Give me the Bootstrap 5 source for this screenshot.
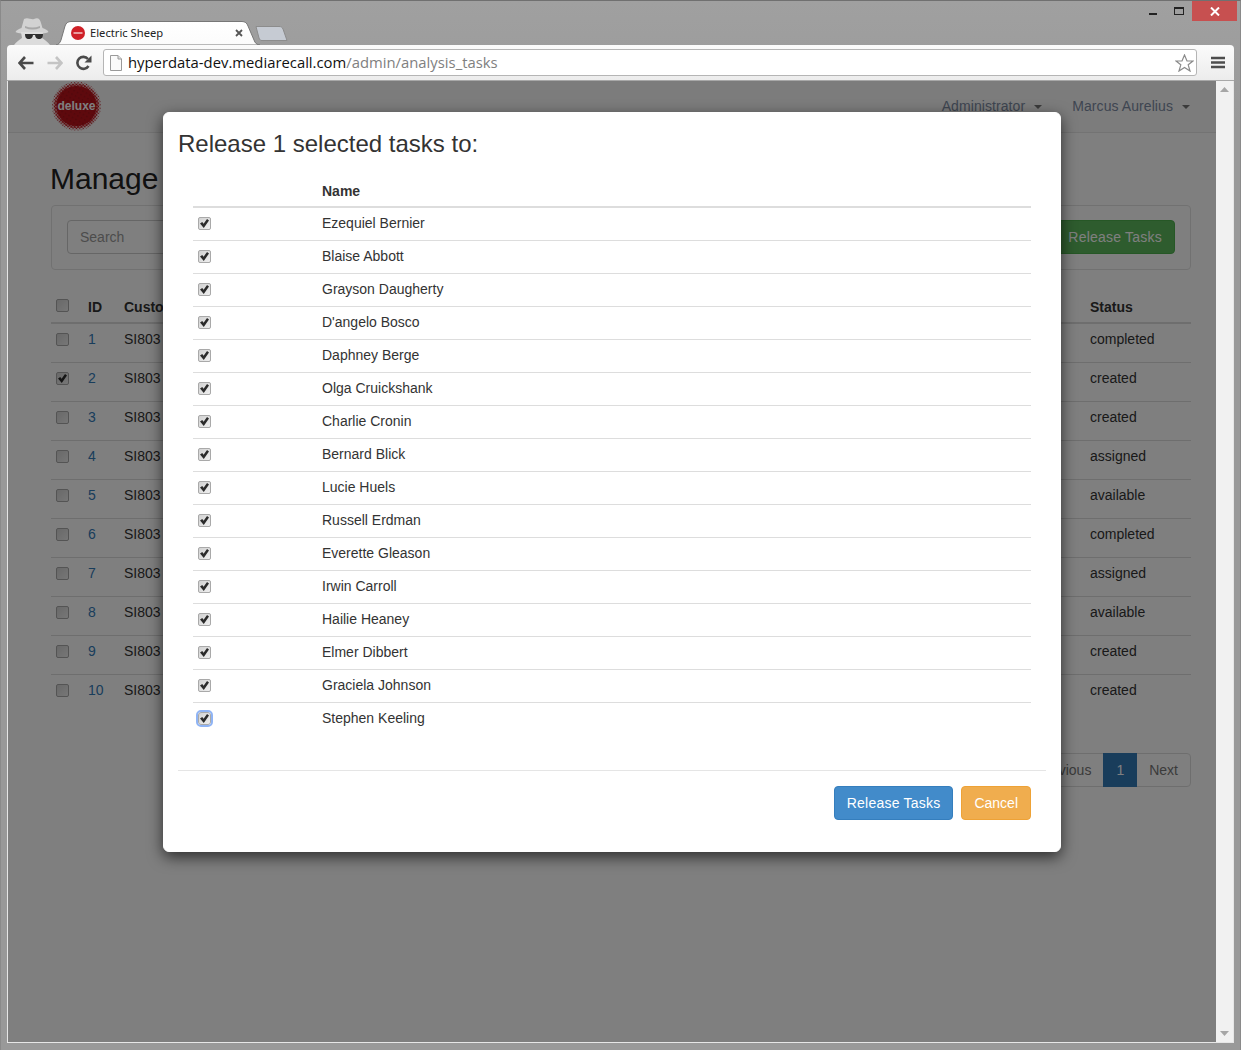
<!DOCTYPE html>
<html lang="en">
<head>
<meta charset="utf-8">
<title>Electric Sheep</title>
<link rel="stylesheet" href="https://cdn.jsdelivr.net/npm/bootstrap@5.3.0/dist/css/bootstrap.min.css">
<style>
html,body{height:1050px;overflow:hidden}
body{font-family:"Liberation Sans",Arial,sans-serif;font-size:14px;line-height:20px;color:#333;background:#9d9d9d}
.win{width:1241px;height:1050px;padding:0 7px 7px 6px;border-top:1px solid #707070;border-left:1px solid #8a8a8a;border-right:1px solid #8a8a8a;background:linear-gradient(#a0a0a0,#999 120px)}
.tabstrip{height:44px;flex:none;margin:0 -4px 0 -6px}
.spy{width:36px;height:28px;margin-left:13px}
.chrome-tab{width:204px;height:24px;margin-left:6px;padding-left:15px;font-family:"Noto Sans","Open Sans",sans-serif;font-size:11.2px;color:#222}
.tab-shape{position:absolute;left:0;top:0}
.tab-inner{position:relative}
.favicon{width:14px;height:14px;margin-right:5px}
.tab-x{position:absolute;left:179px;top:8px}
.newtab{margin-left:-6px;margin-bottom:3px}
.winbtns{margin-left:auto}
.wb{width:26px;height:20px}
.wb-close{width:45px;height:20px;background:#c75050}
.toolbar{height:36px;flex:none;border-radius:4px 4px 0 0;background:linear-gradient(#fbfbfb,#ececec);border-bottom:1px solid #a8a8a8;padding-left:4px;margin:0 -1px 0 0}
.tool{width:29px;height:29px}
.omni{height:27px;margin-left:5px;background:#fff;border:1px solid #b5b5b5;border-radius:3px;padding:0 2px 0 6px;font-family:"Open Sans","Noto Sans",sans-serif;font-size:14.84px;color:#808080;line-height:25px;width:1094px;flex:none}
.omni b{font-weight:400;color:#111}
.omni-text{margin-left:6px}
.menu-btn{width:37px;flex:none}
.view{height:962px;flex:none;border-left:1px solid #e6e6e6;border-right:1px solid #e6e6e6;border-bottom:1px solid #e6e6e6;margin:0 -1px 0 0}
.pagearea{width:1208px;height:961px;flex:none;background:#fff;overflow:hidden}
.scroller{width:17px;background:#f1f1f1;height:961px;padding:6px 0}
.top-nav{height:52px;background:#f8f8f8;border-bottom:1px solid #e7e7e7;padding:0 26px 2px 43px}
.top-nav .nav-item-x{color:#7d8ba3;font-size:14px;margin-left:30px;letter-spacing:.08px}
.nav-caret{display:inline-block;width:0;height:0;border-top:4px solid #777;border-left:4px solid transparent;border-right:4px solid transparent;margin-left:9px;vertical-align:middle}
.page-wrap{padding:0 25px 0 43px}
.page-title{font-size:30px;line-height:33px;margin:29px 0 10px -1px;font-weight:400;color:#222}
.filter-box{height:65px;border:1px solid #e3e3e3;border-radius:4px;padding:14px 15px 0;margin-bottom:19px;background:#fff}
.search-in{width:300px;height:34px;font-size:14px;padding:6px 12px;border-radius:4px;border-color:#ccc;color:#555}
.search-in::placeholder{color:#999}
.btn-rel{height:34px;font-size:14px;padding:6px 12px;border-radius:4px;background:#5cb85c;border-color:#4cae4c;color:#fff;letter-spacing:.22px}
.task-table{table-layout:fixed;width:1140px;margin:0;color:#333;--bs-table-color:#333;--bs-table-bg:transparent}
.task-table th{padding:8px 0 5px 8px;border-bottom:2px solid #ddd;line-height:20px;font-weight:700;vertical-align:top}
.task-table td{padding:5px 0 13px 8px;border-bottom:1px solid #ddd;line-height:20px}
.task-table tr:last-child td{border-bottom:0}
.task-table a{color:#337ab7;text-decoration:none}
.col-c{width:29px}.col-i{width:36px}.col-s{width:109px}
.task-table .cell-c{padding-left:5px}
.chk{appearance:none;-webkit-appearance:none;display:block;width:13px;height:13px;margin:0;border:1px solid #a9a9a9;border-radius:2px;background:linear-gradient(135deg,#d2d2d2,#eeeeee);position:relative}
.chk:checked::after{content:"";position:absolute;left:1px;top:1px;width:9px;height:9px;background:#2b2b2b;clip-path:polygon(0 50%,25% 32%,40% 52%,78% 0,100% 16%,42% 100%)}
.chk.focus-x{outline:2px solid #8fb4f5;outline-offset:0;border-radius:3px}
.task-table .chk{margin-top:4px}
.task-table th .chk{margin-top:2px}
.pager{margin:40px 0 0;--bs-pagination-padding-x:12px;--bs-pagination-padding-y:6px;--bs-pagination-font-size:14px;--bs-pagination-color:#777;--bs-pagination-border-color:#ddd;--bs-pagination-active-bg:#337ab7;--bs-pagination-active-border-color:#337ab7;--bs-pagination-border-radius:4px;line-height:20px}
.dim{position:absolute;width:100%;height:100%;--bs-backdrop-bg:#000;--bs-backdrop-opacity:.5}
.dlg{position:absolute;display:block;width:100%;height:100%;overflow:hidden;--bs-modal-bg:#fff;--bs-modal-border-color:#fff;--bs-modal-border-width:1px;--bs-modal-border-radius:6px;--bs-modal-inner-border-radius:5px;--bs-modal-header-border-width:0;--bs-modal-footer-gap:0;--bs-modal-footer-border-width:1px;--bs-modal-footer-border-color:#e5e5e5;--bs-modal-color:#333}
.dlg .modal-dialog{width:898px;max-width:898px;margin:31px 0 0 155px}
.dlg .modal-content{box-shadow:0 5px 15px rgba(0,0,0,.65);background-clip:border-box}
.dlg .modal-header{padding:18px 14px 11px}
.dlg .modal-title{font-size:24px;line-height:26px;font-weight:400;color:#333}
.dlg .modal-body{padding:5px 29px 35px}
.pick-table{width:838px;margin:0;table-layout:fixed;--bs-table-bg:transparent;--bs-table-color:#333}
.pick-table th{padding:8px 0 5px 8px;border-bottom:2px solid #ddd;line-height:20px;font-weight:700}
.pick-table td{padding:5px 0 7px 8px;border-bottom:1px solid #ddd;line-height:20px}
.pick-table tr:last-child td{border-bottom:0}
.pick-table .col-p{width:121px}
.pick-table .cell-c{padding-left:5px}
.pick-table .chk{margin-top:4px}
.dlg .modal-footer{margin:0 14px;padding:15px 15px 31px}
.dlg .btn{height:34px;font-size:14px;padding:6px 12px;border-radius:4px;line-height:20px}
.dlg .btn-go{background:#428bca;border-color:#357ebd;color:#fff;letter-spacing:.22px}
.dlg .btn-stop{background:#f0ad4e;border-color:#eea236;color:#fff}
</style>
</head>
<body>
<div class="win d-flex flex-column">
  <div class="tabstrip d-flex align-items-end">
    <svg class="spy" viewBox="0 0 36 28" aria-hidden="true">
      <path d="M10 2 C14 0 17 3 20 2 C24 0 26 2 27 6 L28.5 11 C31 12 34 13 34.5 15 C30 18 6 18 1.5 15 C2 13 5 12 7.5 11 Z" fill="#d2d2d2"/>
      <path d="M7 15 H29 L28 21 C31 23 34 25 36 28 H0 C2 25 5 23 8 21 Z" fill="#dcdcdc"/>
      <path d="M11 9 C16 11 21 11 26 9 L26 11 C21 13 16 13 11 11 Z" fill="#a8a8a8"/>
      <path transform="translate(2 0)" d="M9 17 H17 C17 21 15 22 13 22 C10 22 9 20 9 17 Z M19 17 H27 C27 20 26 22 23 22 C21 22 19 21 19 17 Z M17 17 H19 V18 H17 Z" fill="#2e2e2e"/>
    </svg>
    <div class="chrome-tab position-relative d-flex align-items-center">
      <svg class="tab-shape" width="204" height="24" viewBox="0 0 204 24" aria-hidden="true">
        <defs><linearGradient id="tg" x1="0" y1="0" x2="0" y2="1"><stop offset="0" stop-color="#fff"/><stop offset="1" stop-color="#fbfbfb"/></linearGradient></defs>
        <path d="M0 24 C2 24 4 22 5 19 L9 5 C10 2 12 .5 15 .5 H186 C189 .5 191 2 192 5 L198 19 C199 22 201 24 204 24 Z" fill="url(#tg)" stroke="#777"/>
      </svg>
      <svg class="favicon tab-inner" viewBox="0 0 14 14" aria-hidden="true"><circle cx="7" cy="7" r="7" fill="#cf2027"/><rect x="2.5" y="6.3" width="9" height="1.4" fill="#f4d0d0"/></svg>
      <span class="tab-inner">Electric Sheep</span>
      <svg class="tab-x" width="8" height="8" viewBox="0 0 8 8" aria-hidden="true"><path d="M1 1 L7 7 M7 1 L1 7" stroke="#555" stroke-width="1.8"/></svg>
    </div>
    <svg class="newtab" width="34" height="17" viewBox="0 0 34 17" aria-hidden="true"><path d="M2 1.5 H25 C27 1.5 28 2 29 4 L33 15.5 H8 C6 15.5 6 15 5 13 Z" fill="#c6cbd3" stroke="#8c8c8c"/></svg>
    <div class="winbtns d-flex align-self-start">
      <div class="wb d-flex align-items-center justify-content-center"><svg width="9" height="10" viewBox="0 0 9 10" aria-hidden="true"><rect y="7" width="8" height="2" fill="#222"/></svg></div>
      <div class="wb d-flex align-items-center justify-content-center"><svg width="11" height="9" viewBox="0 0 11 9" aria-hidden="true"><rect x=".5" y=".5" width="9" height="7" fill="none" stroke="#222"/><rect x="0" y="0" width="10" height="2" fill="#222"/></svg></div>
      <div class="wb-close d-flex align-items-center justify-content-center"><svg width="10" height="9" viewBox="0 0 10 9" aria-hidden="true"><path d="M1 .5 L9 8.5 M9 .5 L1 8.5" stroke="#fff" stroke-width="2"/></svg></div>
    </div>
  </div>
  <div class="toolbar d-flex align-items-center">
    <div class="tool d-flex align-items-center justify-content-center"><svg width="16" height="14" viewBox="0 0 16 14" aria-hidden="true"><path d="M7 1 L1.5 7 L7 13 M2 7 H15.5" fill="none" stroke="#4a4a4a" stroke-width="2.6"/></svg></div>
    <div class="tool d-flex align-items-center justify-content-center"><svg width="16" height="14" viewBox="0 0 16 14" aria-hidden="true"><path d="M9 1 L14.5 7 L9 13 M14 7 H.5" fill="none" stroke="#c4c4c4" stroke-width="2.6"/></svg></div>
    <div class="tool d-flex align-items-center justify-content-center"><svg width="16" height="16" viewBox="0 0 16 16" aria-hidden="true"><path d="M12.5 11 A6 6 0 1 1 12 4" fill="none" stroke="#4a4a4a" stroke-width="2.6"/><path d="M15.5 .5 V7.5 H8.5 Z" fill="#4a4a4a"/></svg></div>
    <div class="omni d-flex align-items-center">
      <svg width="12" height="16" viewBox="0 0 12 16" aria-hidden="true"><path d="M.5 .5 H8 L11.5 4 V15.5 H.5 Z" fill="#fafafa" stroke="#9a9a9a"/><path d="M8 .5 V4 H11.5" fill="#e0e0e0" stroke="#9a9a9a"/></svg>
      <span class="omni-text flex-grow-1"><b>hyperdata-dev.mediarecall.com</b>/admin/analysis_tasks</span>
      <svg width="19" height="18" viewBox="0 0 19 18" aria-hidden="true"><path d="M9.5 1 L12 7 H18 L13.2 10.8 L15 17 L9.5 13.4 L4 17 L5.8 10.8 L1 7 H7 Z" fill="#fff" stroke="#8a8a8a" stroke-width="1.2"/></svg>
    </div>
    <div class="menu-btn d-flex justify-content-center ps-1"><svg width="14" height="13" viewBox="0 0 14 13" aria-hidden="true"><path d="M0 2 H14 M0 6.5 H14 M0 11 H14" stroke="#4d4d4d" stroke-width="2.4"/></svg></div>
  </div>
  <div class="view d-flex">
    <div class="pagearea position-relative">
      <div class="top-nav d-flex align-items-center">
        <svg width="50" height="50" viewBox="0 0 50 50" role="img" aria-label="deluxe logo">
          <defs>
            <pattern id="dots" width="2.4" height="2.4" patternUnits="userSpaceOnUse" patternTransform="rotate(45)"><circle cx="1.2" cy="1.2" r=".7" fill="#b5121a"/></pattern>
            <pattern id="dots2" width="2.4" height="2.4" patternUnits="userSpaceOnUse" patternTransform="rotate(45)"><circle cx="1.2" cy="1.2" r="1.1" fill="#c4141c"/></pattern>
            <pattern id="dark" width="4" height="4" patternUnits="userSpaceOnUse" patternTransform="rotate(30)"><rect width="1.6" height="1.6" fill="#9a0e16" opacity=".7"/></pattern>
          </defs>
          <circle cx="25.5" cy="25" r="24.5" fill="url(#dots)"/>
          <circle cx="25.5" cy="25" r="22.5" fill="url(#dots2)"/>
          <circle cx="25.5" cy="25" r="20" fill="#bd131b"/>
          <circle cx="25.5" cy="25" r="20" fill="url(#dark)"/>
          <text x="25.5" y="29" text-anchor="middle" font-family="Liberation Sans" font-weight="700" font-size="12" fill="#fff">deluxe</text>
        </svg>
        <div class="ms-auto d-flex">
          <span class="nav-item-x">Administrator<i class="nav-caret"></i></span>
          <span class="nav-item-x">Marcus Aurelius<i class="nav-caret"></i></span>
        </div>
      </div>
      <div class="page-wrap">
        <h1 class="page-title">Manage</h1>
        <div class="filter-box d-flex justify-content-between">
          <input class="form-control search-in" type="text" placeholder="Search">
          <button class="btn btn-rel" type="button">Release Tasks</button>
        </div>
        <table class="table task-table">
          <colgroup><col class="col-c"><col class="col-i"><col><col class="col-s"></colgroup>
          <thead><tr><th class="cell-c"><input class="chk" type="checkbox"></th><th>ID</th><th>Customer</th><th>Status</th></tr></thead>
          <tbody>
            <tr><td class="cell-c"><input class="chk" type="checkbox"></td><td><a href="#">1</a></td><td>SI803</td><td>completed</td></tr>
            <tr><td class="cell-c"><input class="chk" type="checkbox" checked></td><td><a href="#">2</a></td><td>SI803</td><td>created</td></tr>
            <tr><td class="cell-c"><input class="chk" type="checkbox"></td><td><a href="#">3</a></td><td>SI803</td><td>created</td></tr>
            <tr><td class="cell-c"><input class="chk" type="checkbox"></td><td><a href="#">4</a></td><td>SI803</td><td>assigned</td></tr>
            <tr><td class="cell-c"><input class="chk" type="checkbox"></td><td><a href="#">5</a></td><td>SI803</td><td>available</td></tr>
            <tr><td class="cell-c"><input class="chk" type="checkbox"></td><td><a href="#">6</a></td><td>SI803</td><td>completed</td></tr>
            <tr><td class="cell-c"><input class="chk" type="checkbox"></td><td><a href="#">7</a></td><td>SI803</td><td>assigned</td></tr>
            <tr><td class="cell-c"><input class="chk" type="checkbox"></td><td><a href="#">8</a></td><td>SI803</td><td>available</td></tr>
            <tr><td class="cell-c"><input class="chk" type="checkbox"></td><td><a href="#">9</a></td><td>SI803</td><td>created</td></tr>
            <tr><td class="cell-c"><input class="chk" type="checkbox"></td><td><a href="#">10</a></td><td>SI803</td><td>created</td></tr>
          </tbody>
        </table>
        <ul class="pagination pager justify-content-end">
          <li class="page-item"><a class="page-link" href="#">Previous</a></li>
          <li class="page-item active"><a class="page-link" href="#">1</a></li>
          <li class="page-item"><a class="page-link" href="#">Next</a></li>
        </ul>
      </div>
      <div class="modal-backdrop show dim"></div>
      <div class="modal dlg">
        <div class="modal-dialog">
          <div class="modal-content">
            <div class="modal-header"><h4 class="modal-title">Release 1 selected tasks to:</h4></div>
            <div class="modal-body">
              <table class="table pick-table">
                <colgroup><col class="col-p"><col></colgroup>
                <thead><tr><th></th><th>Name</th></tr></thead>
                <tbody>
                  <tr><td class="cell-c"><input class="chk" type="checkbox" checked></td><td>Ezequiel Bernier</td></tr>
                  <tr><td class="cell-c"><input class="chk" type="checkbox" checked></td><td>Blaise Abbott</td></tr>
                  <tr><td class="cell-c"><input class="chk" type="checkbox" checked></td><td>Grayson Daugherty</td></tr>
                  <tr><td class="cell-c"><input class="chk" type="checkbox" checked></td><td>D'angelo Bosco</td></tr>
                  <tr><td class="cell-c"><input class="chk" type="checkbox" checked></td><td>Daphney Berge</td></tr>
                  <tr><td class="cell-c"><input class="chk" type="checkbox" checked></td><td>Olga Cruickshank</td></tr>
                  <tr><td class="cell-c"><input class="chk" type="checkbox" checked></td><td>Charlie Cronin</td></tr>
                  <tr><td class="cell-c"><input class="chk" type="checkbox" checked></td><td>Bernard Blick</td></tr>
                  <tr><td class="cell-c"><input class="chk" type="checkbox" checked></td><td>Lucie Huels</td></tr>
                  <tr><td class="cell-c"><input class="chk" type="checkbox" checked></td><td>Russell Erdman</td></tr>
                  <tr><td class="cell-c"><input class="chk" type="checkbox" checked></td><td>Everette Gleason</td></tr>
                  <tr><td class="cell-c"><input class="chk" type="checkbox" checked></td><td>Irwin Carroll</td></tr>
                  <tr><td class="cell-c"><input class="chk" type="checkbox" checked></td><td>Hailie Heaney</td></tr>
                  <tr><td class="cell-c"><input class="chk" type="checkbox" checked></td><td>Elmer Dibbert</td></tr>
                  <tr><td class="cell-c"><input class="chk" type="checkbox" checked></td><td>Graciela Johnson</td></tr>
                  <tr><td class="cell-c"><input class="chk focus-x" type="checkbox" checked></td><td>Stephen Keeling</td></tr>
                </tbody>
              </table>
            </div>
            <div class="modal-footer gap-2">
              <button class="btn btn-go" type="button">Release Tasks</button>
              <button class="btn btn-stop" type="button">Cancel</button>
            </div>
          </div>
        </div>
      </div>
    </div>
    <div class="scroller d-flex flex-column justify-content-between align-items-center">
      <svg width="9" height="5" viewBox="0 0 9 5" aria-hidden="true"><path d="M4.5 0 L9 5 H0 Z" fill="#a6a6a6"/></svg>
      <svg width="9" height="5" viewBox="0 0 9 5" aria-hidden="true"><path d="M0 0 H9 L4.5 5 Z" fill="#a6a6a6"/></svg>
    </div>
  </div>
</div>
<script src="https://cdn.jsdelivr.net/npm/bootstrap@5.3.0/dist/js/bootstrap.bundle.min.js"></script>
</body>
</html>
